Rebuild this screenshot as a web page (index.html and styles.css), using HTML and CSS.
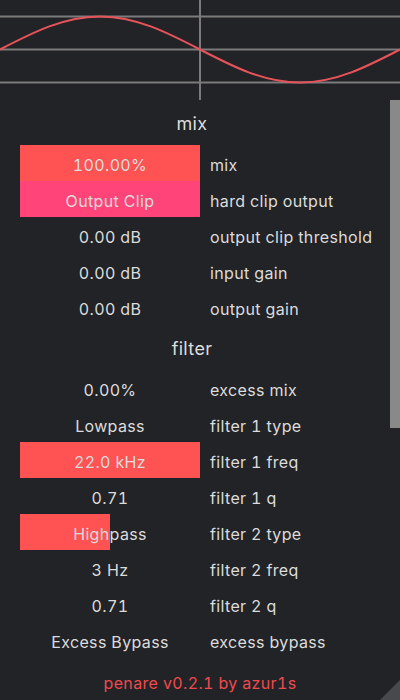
FILE: index.html
```html
<!DOCTYPE html>
<html>
<head>
<meta charset="utf-8">
<link rel="stylesheet" href="styles.css">
</head>
<body>
<div class="app">
  <svg class="scope" width="400" height="100" viewBox="0 0 400 100">
    <line x1="0" y1="16.5" x2="400" y2="16.5" class="grid"/>
    <line x1="0" y1="49.5" x2="400" y2="49.5" class="grid"/>
    <line x1="0" y1="82.5" x2="400" y2="82.5" class="grid"/>
    <line x1="200" y1="0" x2="200" y2="100" class="grid"/>
    <path class="wave" d="M0,49.5 C32.6,32.6 63.8,16.5 100,16.5 C136.2,16.5 167.4,32.6 200,49.5 C232.6,66.4 263.8,82.5 300,82.5 C336.2,82.5 367.4,66.4 400,49.5"/>
  </svg>
  <div class="panel">
    <div class="content">
      <div class="section-title">mix</div>
      <div class="row"><div class="value"><div class="fill red" style="width:100%"></div><span>100.00%</span></div><div class="label">mix</div></div>
      <div class="row"><div class="value"><div class="fill pink" style="width:100%"></div><span>Output Clip</span></div><div class="label">hard clip output</div></div>
      <div class="row"><div class="value"><span>0.00 dB</span></div><div class="label">output clip threshold</div></div>
      <div class="row"><div class="value"><span>0.00 dB</span></div><div class="label">input gain</div></div>
      <div class="row"><div class="value"><span>0.00 dB</span></div><div class="label">output gain</div></div>
      <div class="section-title">filter</div>
      <div class="row"><div class="value"><span>0.00%</span></div><div class="label">excess mix</div></div>
      <div class="row"><div class="value"><span>Lowpass</span></div><div class="label">filter 1 type</div></div>
      <div class="row"><div class="value"><div class="fill red" style="width:100%"></div><span>22.0 kHz</span></div><div class="label">filter 1 freq</div></div>
      <div class="row"><div class="value"><span>0.71</span></div><div class="label">filter 1 q</div></div>
      <div class="row"><div class="value"><div class="fill red" style="width:50%"></div><span>Highpass</span></div><div class="label">filter 2 type</div></div>
      <div class="row"><div class="value"><span>3 Hz</span></div><div class="label">filter 2 freq</div></div>
      <div class="row"><div class="value"><span>0.71</span></div><div class="label">filter 2 q</div></div>
      <div class="row"><div class="value"><span>Excess Bypass</span></div><div class="label">excess bypass</div></div>
    </div>
    <div class="scrollthumb"></div>
  </div>
  <div class="footer">penare v0.2.1 by azur1s</div>
  <div class="corner"></div>
</div>
</body>
</html>
```
FILE: styles.css
```css
html, body {
  margin: 0;
  padding: 0;
  background: #222326;
}
.app {
  position: relative;
  width: 400px;
  height: 700px;
  overflow: hidden;
  background: #222326;
  font-family: Inter, "Noto Sans", sans-serif;
  color: #dcdcdc;
  font-size: 16px;
  letter-spacing: 0.35px;
  font-feature-settings: "tnum" 1;
}
.scope {
  display: block;
}
.grid {
  stroke: #7b7b7b;
  stroke-width: 2;
}
.wave {
  fill: none;
  stroke: #e8535a;
  stroke-width: 2;
}
.panel {
  position: relative;
  height: 564px;
}
.content {
  width: 384px;
  display: flex;
  flex-direction: column;
}
.section-title {
  height: 45px;
  display: flex;
  align-items: center;
  justify-content: center;
  font-size: 18px;
  padding-top: 2px;
  box-sizing: border-box;
}
.row {
  height: 36px;
  display: grid;
  grid-template-columns: 180px auto;
  column-gap: 10px;
  padding-left: 20px;
}
.value {
  position: relative;
  display: flex;
  align-items: center;
  justify-content: center;
  padding-top: 3px;
  box-sizing: border-box;
}
.value span {
  position: relative;
}
.fill {
  position: absolute;
  left: 0;
  top: 0;
  bottom: 0;
}
.fill.red {
  background: #ff5252;
}
.fill.pink {
  background: #ff4479;
}
.label {
  display: flex;
  align-items: center;
  white-space: nowrap;
  padding-top: 3px;
  box-sizing: border-box;
}
.scrollthumb {
  position: absolute;
  right: 0;
  top: 0;
  width: 10px;
  height: 328px;
  background: #898989;
}
.footer {
  height: 36px;
  display: flex;
  align-items: center;
  justify-content: center;
  color: #ee4a4f;
  font-size: 16px;
  letter-spacing: 0.35px;
  padding-top: 2px;
  box-sizing: border-box;
}
.corner {
  position: absolute;
  right: 0;
  bottom: 0;
  width: 0;
  height: 0;
  border-style: solid;
  border-width: 0 0 20px 20px;
  border-color: transparent transparent #48494c transparent;
}
```
